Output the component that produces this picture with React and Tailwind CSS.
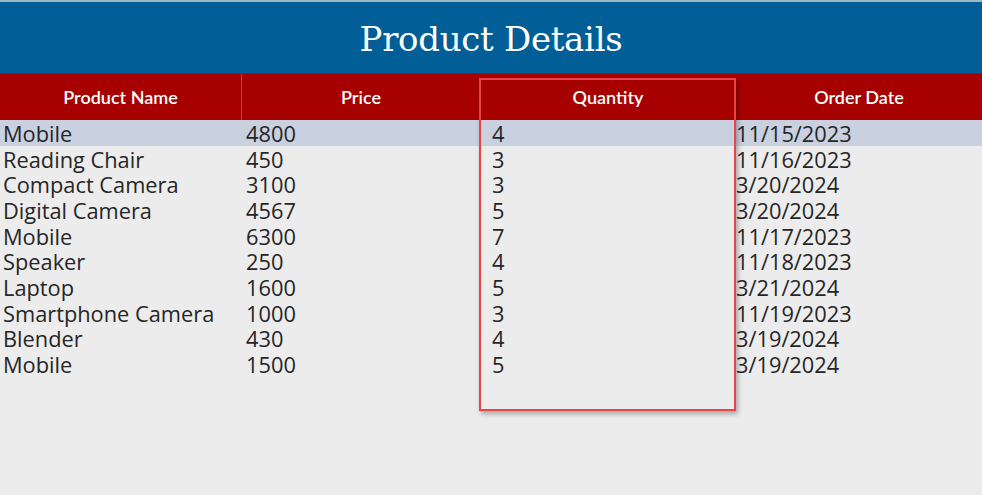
import React from "react";

const rows = [
  ["Mobile", "4800", "4", "11/15/2023"],
  ["Reading Chair", "450", "3", "11/16/2023"],
  ["Compact Camera", "3100", "3", "3/20/2024"],
  ["Digital Camera", "4567", "5", "3/20/2024"],
  ["Mobile", "6300", "7", "11/17/2023"],
  ["Speaker", "250", "4", "11/18/2023"],
  ["Laptop", "1600", "5", "3/21/2024"],
  ["Smartphone Camera", "1000", "3", "11/19/2023"],
  ["Blender", "430", "4", "3/19/2024"],
  ["Mobile", "1500", "5", "3/19/2024"],
];

export default function App() {
  return (
    <div className="relative w-[982px] h-[495px] bg-[#ececec] overflow-hidden">
      <div className="h-[2px] bg-[#9fb8c8]" />
      <div className="h-[72px] bg-[#015e96] border-b border-[#0b4a78] flex items-center justify-center">
        <h1 className="text-white text-[34px] font-['DejaVu_Serif',serif] tracking-[-0.3px] leading-none pt-[2px]">
          Product Details
        </h1>
      </div>
      <div className="grid grid-cols-[242px_238px_256px_1fr] h-[46px] bg-[#a70000] text-white text-[18px] font-['Lato',sans-serif] font-semibold">
        <div className="flex items-center justify-center border-r border-[#d0383d]">Product Name</div>
        <div className="flex items-center justify-center">Price</div>
        <div className="flex items-center justify-center">Quantity</div>
        <div className="flex items-center justify-center">Order Date</div>
      </div>
      <div className="font-['Open_Sans',sans-serif] text-[21.8px] text-[#262626]">
        {rows.map((r, i) => (
          <div
            key={i}
            className={`grid grid-cols-[242px_248px_246px_1fr] h-[25.7px] items-center leading-none ${i === 0 ? "bg-[#c9d1e1]" : ""}`}
          >
            <div className="pl-[3px] pt-[2px]">{r[0]}</div>
            <div className="pl-[4px] pt-[2px]">{r[1]}</div>
            <div className="pl-[2px] pt-[2px]">{r[2]}</div>
            <div className="pl-0 pt-[2px]">{r[3]}</div>
          </div>
        ))}
      </div>
      <div className="absolute left-[479px] top-[78px] w-[257px] h-[333px] border-2 border-[#ea4447] shadow-[2px_3px_5px_rgba(0,0,0,0.3)]" />
    </div>
  );
}
